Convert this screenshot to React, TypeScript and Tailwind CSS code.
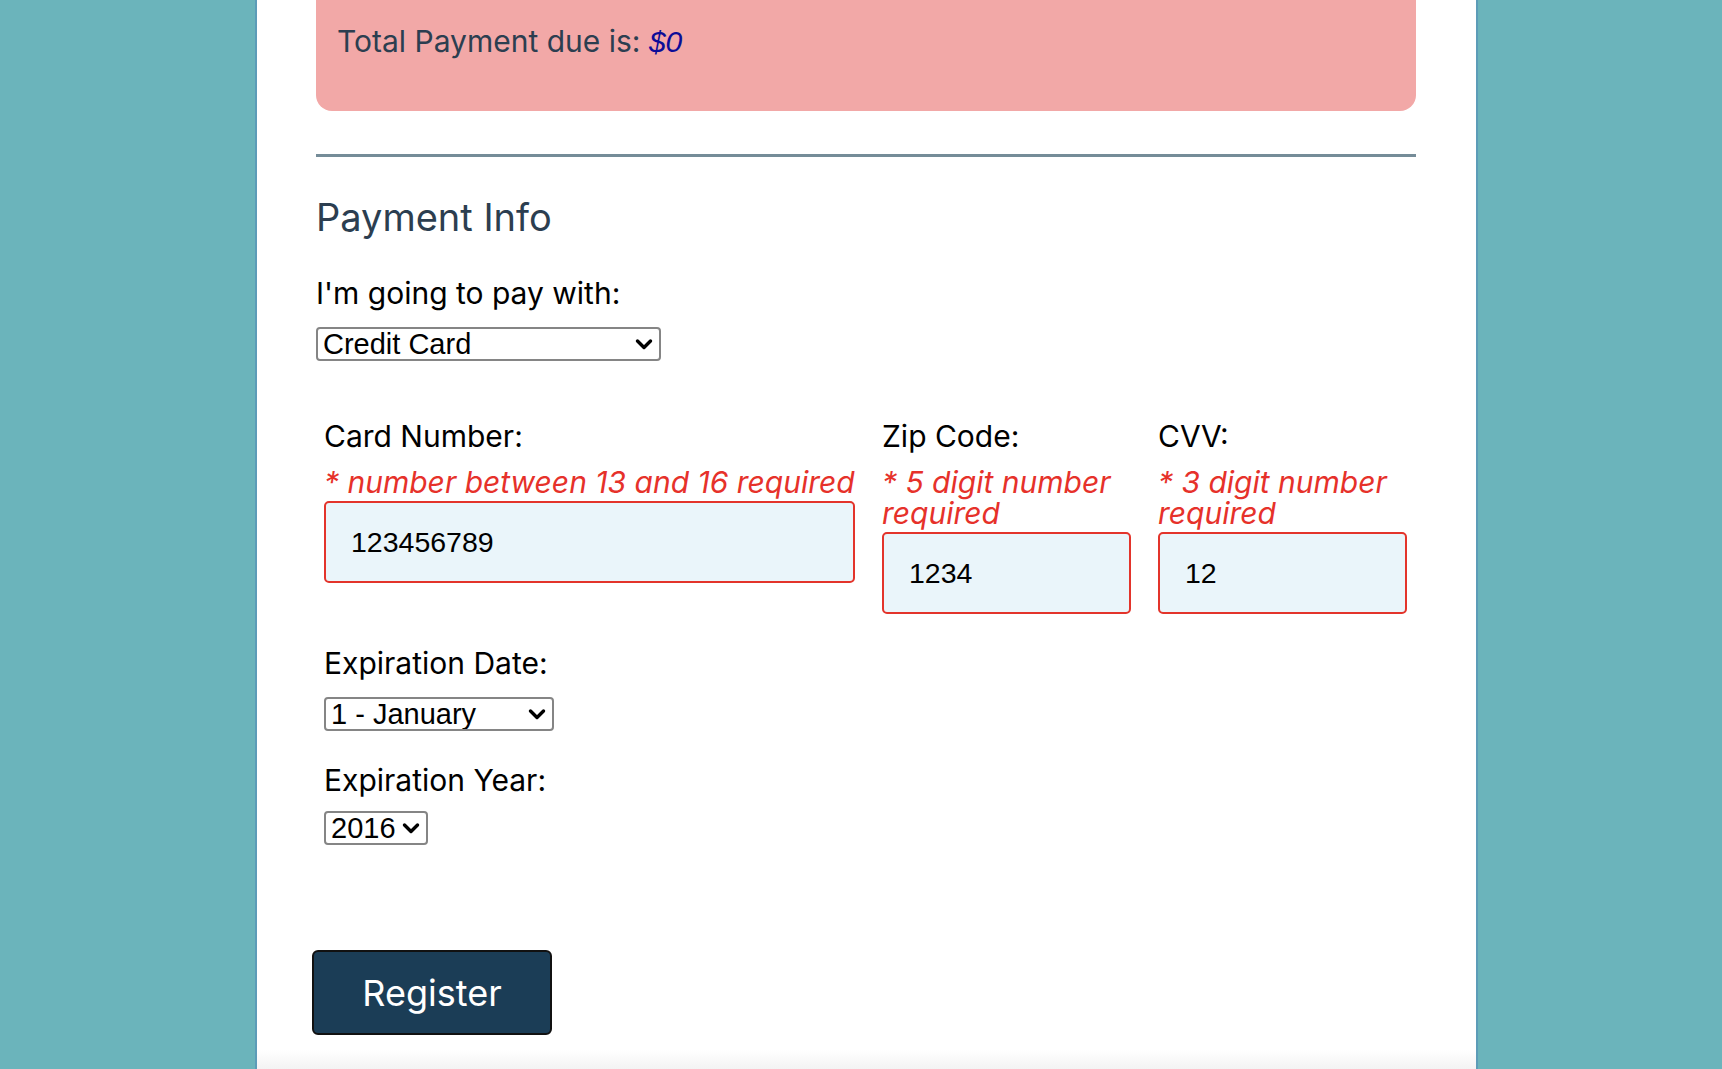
import React from "react";

function Chevron({ className }: { className: string }) {
  return (
    <svg
      width="20"
      height="13"
      viewBox="0 0 20 13"
      className={"pointer-events-none absolute top-1/2 -translate-y-1/2 " + className}
    >
      <polyline
        points="3.5,3.5 10,10 16.5,3.5"
        fill="none"
        stroke="#000"
        strokeWidth="3.4"
        strokeLinecap="round"
        strokeLinejoin="round"
      />
    </svg>
  );
}

function FakeSelect({
  wrap,
  value,
  options,
  chevron,
}: {
  wrap: string;
  value: string;
  options: string[];
  chevron: string;
}) {
  return (
    <div className={"relative h-[34px] " + wrap}>
      <select
        defaultValue={value}
        className="h-full w-full appearance-none rounded-[4px] border-2 border-[#858585] bg-white pl-[5px] font-['Liberation_Sans',Arial,sans-serif] text-[29px] leading-none text-black outline-none"
      >
        {options.map((o) => (
          <option key={o} value={o}>
            {o}
          </option>
        ))}
      </select>
      <Chevron className={chevron} />
    </div>
  );
}

function Field({
  col,
  label,
  error,
  value,
}: {
  col: string;
  label: string;
  error: string;
  value: string;
}) {
  return (
    <div className={"flex flex-col " + col}>
      <div className="text-[30px] leading-[36px] text-black">{label}</div>
      <div className="mt-[13px] text-[30px] italic leading-[31px] text-[#e6312a]">{error}</div>
      <input
        defaultValue={value}
        className="mt-[3px] h-[82px] w-full rounded-[5px] border-2 border-[#e3342b] bg-[#eaf5fa] pl-[25px] font-['Liberation_Sans',Arial,sans-serif] text-[28.5px] text-black outline-none"
      />
    </div>
  );
}

export default function App() {
  return (
    <div className="flex h-[1069px] w-full overflow-hidden bg-[#6bb4bb] pl-[255px] font-['Inter',sans-serif]">
      <div className="flex h-full w-[1223px] flex-col border-x-2 border-[#5c9cb8] bg-white">
        <div className="flex flex-col pl-[59px]">
          <div className="w-[1100px] rounded-b-[16px] bg-[#f2a8a7] pb-[51px] pl-[21px] pt-[23px]">
            <p className="text-[30px] leading-[36px] text-[#2c3e50]">
              Total Payment due is:{" "}
              <span className="font-['Liberation_Sans',Arial,sans-serif] italic text-[#0c0c98]">$0</span>
            </p>
          </div>

          <div className="mt-[43px] h-[3px] w-[1100px] bg-[#758c98]" />

          <h2 className="mt-[38px] text-[38px] font-normal leading-[44px] text-[#2c3e50]">
            Payment Info
          </h2>

          <p className="mt-[36px] text-[30px] leading-[36px] text-black">I'm going to pay with:</p>

          <div className="mt-[16px]">
            <FakeSelect
              wrap="w-[345px]"
              value="Credit Card"
              options={["Credit Card", "PayPal", "Bitcoin"]}
              chevron="right-[7px]"
            />
          </div>

          <div className="mt-[57px] flex flex-col pl-[8px]">
            <div className="flex items-start gap-[27px]">
              <Field
                col="w-[531px]"
                label="Card Number:"
                error="* number between 13 and 16 required"
                value="123456789"
              />
              <Field col="w-[249px]" label="Zip Code:" error="* 5 digit number required" value="1234" />
              <Field col="w-[249px]" label="CVV:" error="* 3 digit number required" value="12" />
            </div>

            <div className="mt-[31px] text-[30px] leading-[36px] text-black">Expiration Date:</div>
            <div className="mt-[16px]">
              <FakeSelect
                wrap="w-[230px]"
                value="1 - January"
                options={[
                  "1 - January",
                  "2 - February",
                  "3 - March",
                  "4 - April",
                  "5 - May",
                  "6 - June",
                  "7 - July",
                  "8 - August",
                  "9 - September",
                  "10 - October",
                  "11 - November",
                  "12 - December",
                ]}
                chevron="right-[7px]"
              />
            </div>

            <div className="mt-[31px] text-[30px] leading-[36px] text-black">Expiration Year:</div>
            <div className="mt-[13px]">
              <FakeSelect
                wrap="w-[104px]"
                value="2016"
                options={["2016", "2017", "2018", "2019", "2020"]}
                chevron="right-[7px]"
              />
            </div>
          </div>

          <button className="-ml-[4px] mt-[105px] flex h-[85px] w-[240px] items-center justify-center rounded-[6px] border-2 border-[#111] bg-[#1b3d56] text-[36px] leading-none text-white">
            Register
          </button>
        </div>

        <div className="mt-[15px] h-[40px] w-full bg-linear-to-b from-white to-[#f3f3f3]" />
      </div>
    </div>
  );
}
